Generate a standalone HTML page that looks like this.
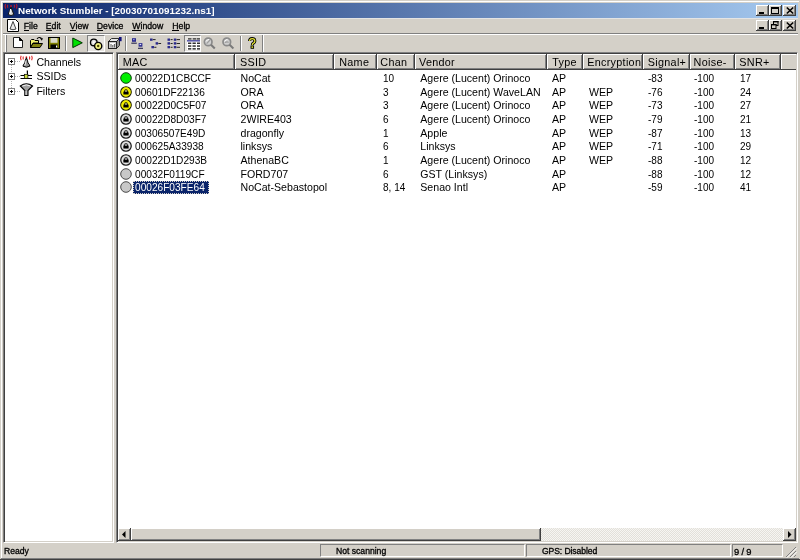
<!DOCTYPE html>
<html><head><meta charset="utf-8">
<style>
*{margin:0;padding:0;box-sizing:border-box}
html,body{width:800px;height:560px;overflow:hidden;background:#d4d0c8}
body{position:relative;will-change:transform;font-family:"Liberation Sans",sans-serif;font-size:10.6px;color:#000}
.a{position:absolute}
.t{position:absolute;white-space:nowrap;line-height:12px}
svg{position:absolute;overflow:visible}
.cbtn{position:absolute;width:13px;height:11px;background:#d4d0c8;border-right:1px solid #404040;border-bottom:1px solid #404040;box-shadow:inset 1px 1px 0 #fff,inset -1px -1px 0 #808080}
.sunk{border-top:1px solid #808080;border-left:1px solid #808080;border-right:1px solid #fff;border-bottom:1px solid #fff}
.in2{position:absolute;left:0;top:0;right:0;bottom:0;box-shadow:inset 1px 1px 0 #404040,inset -1px -1px 0 #d4d0c8}
.menu .t{top:21px;line-height:11px;font-size:8.7px;-webkit-text-stroke:0.3px #000}
.menu u{text-decoration:none;position:relative}
.menu u::after{content:"";position:absolute;left:0;right:0;top:9px;height:1px;background:#000}
.hd{position:absolute;top:54px;height:16px;background:#d4d0c8;border-right:1px solid #404040;border-bottom:1px solid #404040;box-shadow:inset 1px 1px 0 #fff,inset -1px -1px 0 #808080}
.hd span{position:absolute;top:2px;line-height:12px;white-space:nowrap;font-size:10.8px;letter-spacing:0.3px}
.sp{position:absolute;top:544px;height:13px;border-top:1px solid #808080;border-left:1px solid #808080;border-right:1px solid #fff;border-bottom:1px solid #fff}
.sp span{position:absolute;top:1px;line-height:11px;font-size:8.6px;white-space:nowrap;-webkit-text-stroke:0.3px #000}
.vsep{position:absolute;width:2px;border-left:1px solid #808080;border-right:1px solid #fff}
.btn3{position:absolute;background:#d4d0c8;border-right:1px solid #404040;border-bottom:1px solid #404040;box-shadow:inset 1px 1px 0 #fff,inset -1px -1px 0 #808080}
</style></head><body>
<div class="a" style="left:1px;top:1px;width:798px;height:1px;background:#fff"></div>
<div class="a" style="left:1px;top:1px;width:1px;height:558px;background:#fff"></div>
<div class="a" style="left:0;top:559px;width:800px;height:1px;background:#404040"></div>
<div class="a" style="left:1px;top:558px;width:798px;height:1px;background:#808080"></div>
<div class="a" style="left:3px;top:3px;width:795px;height:15px;background:linear-gradient(to right,#0a246a,#a6caf0)"></div>
<div class="a" style="left:3px;top:18px;width:795px;height:1px;background:#e4e4e4"></div>
<svg style="left:0;top:0" width="20" height="18" viewBox="0 0 20 18">
<g fill="none" stroke="#b01830" stroke-width="1.2">
<path d="M5.6 4 Q4.3 6.3 5.6 8.6"/><path d="M7.8 4.8 Q7 6.3 7.8 7.8"/>
<path d="M16.4 4 Q17.7 6.3 16.4 8.6"/><path d="M14.2 4.8 Q15 6.3 14.2 7.8"/>
</g>
<circle cx="11" cy="6" r="1" fill="#b01830"/>
<path d="M11 7 L13.8 14.5 Q11 16.6 8.2 14.5 Z" fill="#d8d8d8" stroke="#101010" stroke-width="1"/>
<path d="M10.6 9 L9.8 14" stroke="#ffffff" stroke-width="1"/>
</svg>
<div class="t" style="left:18px;top:5px;font-weight:bold;font-size:9.9px;color:#fff;line-height:12px">Network Stumbler - [20030701091232.ns1]</div>
<div class="cbtn" style="left:756px;top:5px"></div>
<div class="a" style="left:759px;top:12px;width:5px;height:2px;background:#000"></div>
<div class="cbtn" style="left:769px;top:5px"></div>
<div class="a" style="left:771px;top:6.5px;width:7.5px;height:7px;border:1px solid #000;border-top-width:2px"></div>
<div class="cbtn" style="left:783px;top:5px"></div>
<svg style="left:786px;top:7px" width="8" height="7" viewBox="0 0 8 7"><path d="M0.8 0.5 L7.2 6.5 M7.2 0.5 L0.8 6.5" stroke="#000" stroke-width="1.6"/></svg>
<div class="cbtn" style="left:756px;top:20px"></div>
<div class="a" style="left:759px;top:27px;width:5px;height:2px;background:#000"></div>
<div class="cbtn" style="left:769px;top:20px"></div>
<svg style="left:770px;top:20px" width="10" height="10" viewBox="0 0 10 10">
<rect x="3.5" y="1.5" width="4.5" height="4" fill="none" stroke="#000" stroke-width="1"/><rect x="3" y="1" width="5.5" height="1.4" fill="#000"/>
<rect x="1.5" y="4.5" width="4.5" height="4" fill="#d4d0c8" stroke="#000" stroke-width="1"/><rect x="1" y="4" width="5.5" height="1.4" fill="#000"/></svg>
<div class="cbtn" style="left:783px;top:20px"></div>
<svg style="left:786px;top:22px" width="8" height="7" viewBox="0 0 8 7"><path d="M0.8 0.5 L7.2 6.5 M7.2 0.5 L0.8 6.5" stroke="#000" stroke-width="1.6"/></svg>
<svg style="left:7px;top:19px" width="12" height="13" viewBox="0 0 12 13">
<path d="M0.5 0.5 H8.5 L11.5 3.5 V12.5 H0.5 Z" fill="#fff" stroke="#000" stroke-width="1"/>
<path d="M6 2.5 L9 10 Q6 11.5 3 10 Z" fill="#e8e8e8" stroke="#303030" stroke-width="0.9"/>
</svg>
<div class="menu">
<div class="t" style="left:23.8px"><u>F</u>ile</div>
<div class="t" style="left:45.8px"><u>E</u>dit</div>
<div class="t" style="left:69.8px"><u>V</u>iew</div>
<div class="t" style="left:96.8px"><u>D</u>evice</div>
<div class="t" style="left:132.3px"><u>W</u>indow</div>
<div class="t" style="left:172.3px"><u>H</u>elp</div>
</div>
<div class="a" style="left:3px;top:33px;width:795px;height:1px;background:#808080"></div>
<div class="a" style="left:3px;top:34px;width:795px;height:1px;background:#fff"></div>
<div class="vsep" style="left:5px;top:35px;height:17px;border-left:1px solid #fff;border-right:1px solid #808080"></div>
<div class="vsep" style="left:65px;top:36px;height:15px"></div>
<div class="vsep" style="left:125px;top:36px;height:15px"></div>
<div class="vsep" style="left:240px;top:36px;height:15px"></div>
<div class="vsep" style="left:262px;top:35px;height:17px;border-left:1px solid #808080;border-right:1px solid #fff"></div>
<div class="a" style="left:87px;top:35px;width:18px;height:17px;background:#e6e4e0;border-top:1px solid #808080;border-left:1px solid #808080;border-right:1px solid #fff;border-bottom:1px solid #fff"></div>
<div class="a" style="left:184px;top:35px;width:17px;height:17px;background:#e6e4e0;border-top:1px solid #808080;border-left:1px solid #808080;border-right:1px solid #fff;border-bottom:1px solid #fff"></div>
<svg style="left:0;top:0" width="270" height="56" viewBox="0 0 270 56">
<!-- new -->
<path d="M13.5 37.5 H19.5 L22.5 40.5 V47.5 H13.5 Z" fill="#fff" stroke="#202020" stroke-width="1"/>
<path d="M19.5 37.5 V40.5 H22.5 Z" fill="#000" stroke="#000" stroke-width="1"/>
<!-- open -->
<path d="M30.5 40.5 L31.5 39.5 H34 L35 40.5 H38.5 V43 H33 L30.5 47.5 Z" fill="#f0f070" stroke="#000" stroke-width="1"/>
<path d="M30.5 47.5 L33 43.5 H42.5 L40 47.5 Z" fill="#808010" stroke="#000" stroke-width="1"/>
<path d="M37 39 Q39 36.3 41.5 38.5" fill="none" stroke="#000" stroke-width="1.1"/>
<path d="M40 38.3 H43 L41.8 40.8 Z" fill="#000"/>
<!-- save -->
<rect x="48.5" y="37.5" width="11" height="11" fill="#808000" stroke="#000" stroke-width="1"/>
<rect x="50.5" y="38" width="7" height="4.8" fill="#d8d8c8"/>
<rect x="50.5" y="44.5" width="7" height="4" fill="#000"/>
<rect x="56" y="45.5" width="1.2" height="2" fill="#fff"/>
<!-- play -->
<path d="M72.8 38 L82.3 42.8 L72.8 47.6 Z" fill="#00e000" stroke="#003000" stroke-width="1" stroke-linejoin="round"/>
<!-- gears -->
<circle cx="93.8" cy="42.4" r="3.3" fill="#e0e0e0" stroke="#000" stroke-width="1.4"/>
<circle cx="93.8" cy="42.4" r="1.1" fill="#fff"/>
<circle cx="98.2" cy="46" r="3.6" fill="#f0f080" stroke="#000" stroke-width="1.4"/>
<circle cx="98.2" cy="46" r="1.2" fill="#404000"/>
<!-- box with flag -->
<path d="M108.5 41.5 L111.5 38.5 H119.5 L116.5 41.5 Z" fill="#e8e8e8" stroke="#303030" stroke-width="1"/>
<path d="M116.5 41.5 L119.5 38.5 V45.5 L116.5 48.5 Z" fill="#909090" stroke="#303030" stroke-width="1"/>
<rect x="108.5" y="41.5" width="8" height="7" fill="#c8c8c8" stroke="#202020" stroke-width="1"/>
<rect x="110" y="43" width="5" height="4.5" fill="#fff"/>
<path d="M111 44 V47.5 M112.8 45 V47.5 M114.4 44 V47.5" stroke="#404040" stroke-width="0.9"/>
<rect x="119" y="37" width="2.6" height="4.2" fill="#10107a"/>
<!-- large icons -->
<rect x="132" y="38.2" width="4" height="3.6" fill="#2b2b8c"/><rect x="133" y="39" width="1.6" height="1.2" fill="#9090e0"/>
<rect x="131.3" y="42.7" width="5.5" height="0.9" fill="#000030"/>
<rect x="138.6" y="43.1" width="3.8" height="3.6" fill="#2b2b8c"/><rect x="139.6" y="43.9" width="1.6" height="1.2" fill="#e0e0ff"/>
<rect x="138" y="47.8" width="5" height="0.9" fill="#000030"/>
<!-- small icons -->
<g fill="#2b2b8c"><rect x="150" y="38.5" width="2.6" height="2.3"/><rect x="155.6" y="42.2" width="2.5" height="2.4"/><rect x="151.4" y="46" width="2.6" height="2.3"/></g>
<g fill="#101010"><rect x="152.8" y="39.2" width="2.8" height="0.9"/><rect x="158.3" y="43" width="2.8" height="0.9"/><rect x="154.2" y="46.8" width="2.2" height="0.9"/></g>
<!-- list -->
<g fill="#2b2b8c"><rect x="167.5" y="38.5" width="2.5" height="2.3"/><rect x="173.8" y="38.5" width="2.5" height="2.3"/>
<rect x="167.5" y="42.2" width="2.5" height="2.4"/><rect x="173.8" y="42.2" width="2.5" height="2.4"/>
<rect x="167.5" y="46" width="2.5" height="2.3"/><rect x="173.8" y="46" width="2.5" height="2.3"/></g>
<g fill="#101010"><rect x="170.6" y="39.2" width="2" height="0.9"/><rect x="176.6" y="39.2" width="3.4" height="0.9"/>
<rect x="170.6" y="43" width="2" height="0.9"/><rect x="176.6" y="43" width="3.4" height="0.9"/>
<rect x="170.6" y="46.8" width="2" height="0.9"/><rect x="176.6" y="46.8" width="3.4" height="0.9"/></g>
<!-- details grid -->
<rect x="187" y="40" width="13" height="10" fill="#fff"/>
<g fill="#202020"><rect x="188" y="38.3" width="3.5" height="1.2"/><rect x="192.7" y="38.3" width="3.5" height="1.2"/><rect x="196.8" y="38.3" width="3.2" height="1.2"/></g>
<rect x="187" y="40" width="13" height="1.6" fill="#5a5aa8"/>
<g fill="#303030">
<rect x="188" y="42.5" width="3.3" height="1.5"/><rect x="192.5" y="42.5" width="3.3" height="1.5"/><rect x="197" y="42.5" width="3" height="1.5"/>
<rect x="188" y="45.3" width="3.3" height="1.5"/><rect x="192.5" y="45.3" width="3.3" height="1.5"/><rect x="197" y="45.3" width="3" height="1.5"/>
<rect x="188" y="48.1" width="3.3" height="1.5"/><rect x="192.5" y="48.1" width="3.3" height="1.5"/><rect x="197" y="48.1" width="3" height="1.5"/></g>
<!-- zoom in/out disabled -->
<g fill="none">
<circle cx="208.2" cy="41.9" r="3.8" fill="#cfcfcf" stroke="#8a8a8a" stroke-width="1.7"/>
<path d="M206 41.5 Q207 39.6 209 39.3" stroke="#fff" stroke-width="0.9"/>
<path d="M206.6 43.6 L210 40.2" stroke="#9a9a9a" stroke-width="1.1"/>
<path d="M211 44.7 L214.8 48.5" stroke="#7a7a7a" stroke-width="2"/>
<circle cx="226.8" cy="41.9" r="3.8" fill="#cfcfcf" stroke="#8a8a8a" stroke-width="1.7"/>
<path d="M224.6 41.5 Q225.6 39.6 227.6 39.3" stroke="#fff" stroke-width="0.9"/>
<path d="M224.9 42.6 Q226.8 41.2 228.7 42.4" stroke="#9a9a9a" stroke-width="1.1"/>
<path d="M229.6 44.7 L233.4 48.5" stroke="#7a7a7a" stroke-width="2"/>
</g>
<!-- help -->
<path d="M249.6 41 Q249.6 38.6 252.2 38.6 Q254.9 38.6 254.9 40.9 Q254.9 42.4 253.4 43.1 Q252.3 43.7 252.3 45" fill="none" stroke="#000" stroke-width="3"/>
<path d="M249.6 41 Q249.6 38.6 252.2 38.6 Q254.9 38.6 254.9 40.9 Q254.9 42.4 253.4 43.1 Q252.3 43.7 252.3 45" fill="none" stroke="#e4e430" stroke-width="1.2"/>
<rect x="251" y="45.9" width="2.6" height="2.4" fill="#e4e430" stroke="#000" stroke-width="0.9"/>
</svg>
<div class="a sunk" style="left:3px;top:52px;width:111px;height:491px;background:#fff"><div class="in2"></div></div>
<div class="a" style="left:11px;top:65px;width:1px;height:23px;border-left:1px dotted #b0b0b0"></div>
<div class="a" style="left:15px;top:61px;width:5px;height:1px;border-top:1px dotted #b0b0b0"></div>
<div class="a" style="left:15px;top:76px;width:5px;height:1px;border-top:1px dotted #b0b0b0"></div>
<div class="a" style="left:15px;top:91px;width:5px;height:1px;border-top:1px dotted #b0b0b0"></div>
<div class="a" style="left:8px;top:58px;width:7px;height:7px;border:1px solid #808080;background:#fff"></div>
<div class="a" style="left:10px;top:61px;width:3px;height:1px;background:#000"></div>
<div class="a" style="left:11px;top:60px;width:1px;height:3px;background:#000"></div>
<div class="a" style="left:8px;top:73px;width:7px;height:7px;border:1px solid #808080;background:#fff"></div>
<div class="a" style="left:10px;top:76px;width:3px;height:1px;background:#000"></div>
<div class="a" style="left:11px;top:75px;width:1px;height:3px;background:#000"></div>
<div class="a" style="left:8px;top:88px;width:7px;height:7px;border:1px solid #808080;background:#fff"></div>
<div class="a" style="left:10px;top:91px;width:3px;height:1px;background:#000"></div>
<div class="a" style="left:11px;top:90px;width:1px;height:3px;background:#000"></div>
<svg style="left:0;top:0" width="40" height="100" viewBox="0 0 40 100">
<g fill="none" stroke="#e02828" stroke-width="1.1">
<path d="M21.2 55.8 Q19.9 58 21.2 60.2"/><path d="M23.4 56.6 Q22.7 58 23.4 59.4"/>
<path d="M31.6 55.8 Q32.9 58 31.6 60.2"/><path d="M29.4 56.6 Q30.1 58 29.4 59.4"/>
</g>
<circle cx="26.4" cy="57.2" r="0.9" fill="#e02828"/>
<path d="M26.4 57.8 Q27.6 60 28 63 Q29.8 64.6 29.8 66.2 Q26.4 68.2 23 66.2 Q23 64.6 24.8 63 Q25.2 60 26.4 57.8 Z" fill="#909090" stroke="#000" stroke-width="1"/>
<path d="M26 60.5 L25 65.5" stroke="#e8e8e8" stroke-width="1"/>
<rect x="27" y="70.5" width="1" height="4" fill="#000"/><rect x="26" y="70.5" width="1" height="3" fill="#c0c0c0"/>
<rect x="20.5" y="75" width="11.5" height="1" fill="#000"/><rect x="20.5" y="78" width="11.5" height="1" fill="#000"/>
<rect x="24.3" y="74.3" width="3.6" height="4" fill="#d0e040" stroke="#000" stroke-width="0.7"/>
<path d="M20.3 86 Q26.4 81.6 32.5 86 L28 90.5 V95.5 H24.8 V90.5 Z" fill="#a0a0a0" stroke="#000" stroke-width="1.1"/>
<path d="M22.3 86 Q26.4 83.8 30.5 86" fill="none" stroke="#f0f0f0" stroke-width="1"/>
<path d="M26 91 V95" stroke="#f0f0f0" stroke-width="0.8"/>
</svg>
<div class="t" style="left:36.4px;top:56px">Channels</div>
<div class="t" style="left:36.4px;top:70px">SSIDs</div>
<div class="t" style="left:36.4px;top:84.5px">Filters</div>
<div class="a sunk" style="left:116px;top:52px;width:682px;height:491px;background:#fff"><div class="in2"></div></div>
<div class="hd" style="left:118px;width:117px"><span style="left:4.799999999999997px">MAC</span></div>
<div class="hd" style="left:235px;width:99px"><span style="left:5px">SSID</span></div>
<div class="hd" style="left:334px;width:43px"><span style="left:5.199999999999989px">Name</span></div>
<div class="hd" style="left:377px;width:38px"><span style="left:3.3000000000000114px">Chan</span></div>
<div class="hd" style="left:415px;width:132px"><span style="left:4px">Vendor</span></div>
<div class="hd" style="left:547px;width:36px"><span style="left:5.2000000000000455px">Type</span></div>
<div class="hd" style="left:583px;width:60px"><span style="left:4.2000000000000455px">Encryption</span></div>
<div class="hd" style="left:643px;width:47px"><span style="left:4.7999999999999545px">Signal+</span></div>
<div class="hd" style="left:690px;width:45px"><span style="left:3.6000000000000227px">Noise-</span></div>
<div class="hd" style="left:735px;width:46px"><span style="left:4.2999999999999545px">SNR+</span></div>
<div class="hd" style="left:781px;width:15px;border-right:none;box-shadow:inset 1px 1px 0 #fff"></div>
<svg style="left:120px;top:72.20px" width="12" height="12" viewBox="0 0 12 12"><circle cx="6" cy="6" r="5.3" fill="#00f000" stroke="#104010" stroke-width="1"/></svg>
<div class="t" style="left:134.8px;top:72.20px;font-size:11px;transform:scaleX(0.92);transform-origin:0 0">00022D1CBCCF</div>
<div class="t" style="left:240.5px;top:72.20px">NoCat</div>
<div class="t" style="left:382.5px;top:72.20px;font-size:11px;transform:scaleX(0.91);transform-origin:0 0">10</div>
<div class="t" style="left:420.3px;top:72.20px">Agere (Lucent) Orinoco</div>
<div class="t" style="left:552px;top:72.20px">AP</div>
<div class="t" style="left:648px;top:72.20px;font-size:11px;transform:scaleX(0.91);transform-origin:0 0">-83</div>
<div class="t" style="left:694px;top:72.20px;font-size:11px;transform:scaleX(0.91);transform-origin:0 0">-100</div>
<div class="t" style="left:740px;top:72.20px;font-size:11px;transform:scaleX(0.91);transform-origin:0 0">17</div>
<svg style="left:120px;top:85.83px" width="12" height="12" viewBox="0 0 12 12"><circle cx="6" cy="6" r="5.3" fill="#f4f000" stroke="#202000" stroke-width="1.1"/><circle cx="6" cy="6" r="4.2" fill="none" stroke="#e8e800" stroke-width="0.6"/><rect x="3.4" y="5.6" width="5.2" height="2.9" fill="#000"/><path d="M4.2 6 V5.3 Q4.2 3.3 6 3.3 Q7.8 3.3 7.8 5.3 V6 Z" fill="#000"/><ellipse cx="6" cy="5" rx="1" ry="0.7" fill="#ffffb0"/></svg>
<div class="t" style="left:134.8px;top:85.83px;font-size:11px;transform:scaleX(0.92);transform-origin:0 0">00601DF22136</div>
<div class="t" style="left:240.5px;top:85.83px">ORA</div>
<div class="t" style="left:382.5px;top:85.83px;font-size:11px;transform:scaleX(0.91);transform-origin:0 0">3</div>
<div class="t" style="left:420.3px;top:85.83px">Agere (Lucent) WaveLAN</div>
<div class="t" style="left:552px;top:85.83px">AP</div>
<div class="t" style="left:589px;top:85.83px">WEP</div>
<div class="t" style="left:648px;top:85.83px;font-size:11px;transform:scaleX(0.91);transform-origin:0 0">-76</div>
<div class="t" style="left:694px;top:85.83px;font-size:11px;transform:scaleX(0.91);transform-origin:0 0">-100</div>
<div class="t" style="left:740px;top:85.83px;font-size:11px;transform:scaleX(0.91);transform-origin:0 0">24</div>
<svg style="left:120px;top:99.46px" width="12" height="12" viewBox="0 0 12 12"><circle cx="6" cy="6" r="5.3" fill="#f4f000" stroke="#202000" stroke-width="1.1"/><circle cx="6" cy="6" r="4.2" fill="none" stroke="#e8e800" stroke-width="0.6"/><rect x="3.4" y="5.6" width="5.2" height="2.9" fill="#000"/><path d="M4.2 6 V5.3 Q4.2 3.3 6 3.3 Q7.8 3.3 7.8 5.3 V6 Z" fill="#000"/><ellipse cx="6" cy="5" rx="1" ry="0.7" fill="#ffffb0"/></svg>
<div class="t" style="left:134.8px;top:99.46px;font-size:11px;transform:scaleX(0.92);transform-origin:0 0">00022D0C5F07</div>
<div class="t" style="left:240.5px;top:99.46px">ORA</div>
<div class="t" style="left:382.5px;top:99.46px;font-size:11px;transform:scaleX(0.91);transform-origin:0 0">3</div>
<div class="t" style="left:420.3px;top:99.46px">Agere (Lucent) Orinoco</div>
<div class="t" style="left:552px;top:99.46px">AP</div>
<div class="t" style="left:589px;top:99.46px">WEP</div>
<div class="t" style="left:648px;top:99.46px;font-size:11px;transform:scaleX(0.91);transform-origin:0 0">-73</div>
<div class="t" style="left:694px;top:99.46px;font-size:11px;transform:scaleX(0.91);transform-origin:0 0">-100</div>
<div class="t" style="left:740px;top:99.46px;font-size:11px;transform:scaleX(0.91);transform-origin:0 0">27</div>
<svg style="left:120px;top:113.09px" width="12" height="12" viewBox="0 0 12 12"><circle cx="6" cy="6" r="5.3" fill="#a8a8a8" stroke="#1a1a1a" stroke-width="1.1"/><circle cx="6" cy="6" r="3.8" fill="#c8c8c8" stroke="#f0f0f0" stroke-width="0.9"/><rect x="3.4" y="5.6" width="5.2" height="2.9" fill="#000"/><path d="M4.2 6 V5.3 Q4.2 3.3 6 3.3 Q7.8 3.3 7.8 5.3 V6 Z" fill="#000"/><ellipse cx="6" cy="5" rx="1" ry="0.7" fill="#ffffff"/></svg>
<div class="t" style="left:134.8px;top:113.09px;font-size:11px;transform:scaleX(0.92);transform-origin:0 0">00022D8D03F7</div>
<div class="t" style="left:240.5px;top:113.09px">2WIRE403</div>
<div class="t" style="left:382.5px;top:113.09px;font-size:11px;transform:scaleX(0.91);transform-origin:0 0">6</div>
<div class="t" style="left:420.3px;top:113.09px">Agere (Lucent) Orinoco</div>
<div class="t" style="left:552px;top:113.09px">AP</div>
<div class="t" style="left:589px;top:113.09px">WEP</div>
<div class="t" style="left:648px;top:113.09px;font-size:11px;transform:scaleX(0.91);transform-origin:0 0">-79</div>
<div class="t" style="left:694px;top:113.09px;font-size:11px;transform:scaleX(0.91);transform-origin:0 0">-100</div>
<div class="t" style="left:740px;top:113.09px;font-size:11px;transform:scaleX(0.91);transform-origin:0 0">21</div>
<svg style="left:120px;top:126.72px" width="12" height="12" viewBox="0 0 12 12"><circle cx="6" cy="6" r="5.3" fill="#a8a8a8" stroke="#1a1a1a" stroke-width="1.1"/><circle cx="6" cy="6" r="3.8" fill="#c8c8c8" stroke="#f0f0f0" stroke-width="0.9"/><rect x="3.4" y="5.6" width="5.2" height="2.9" fill="#000"/><path d="M4.2 6 V5.3 Q4.2 3.3 6 3.3 Q7.8 3.3 7.8 5.3 V6 Z" fill="#000"/><ellipse cx="6" cy="5" rx="1" ry="0.7" fill="#ffffff"/></svg>
<div class="t" style="left:134.8px;top:126.72px;font-size:11px;transform:scaleX(0.92);transform-origin:0 0">00306507E49D</div>
<div class="t" style="left:240.5px;top:126.72px">dragonfly</div>
<div class="t" style="left:382.5px;top:126.72px;font-size:11px;transform:scaleX(0.91);transform-origin:0 0">1</div>
<div class="t" style="left:420.3px;top:126.72px">Apple</div>
<div class="t" style="left:552px;top:126.72px">AP</div>
<div class="t" style="left:589px;top:126.72px">WEP</div>
<div class="t" style="left:648px;top:126.72px;font-size:11px;transform:scaleX(0.91);transform-origin:0 0">-87</div>
<div class="t" style="left:694px;top:126.72px;font-size:11px;transform:scaleX(0.91);transform-origin:0 0">-100</div>
<div class="t" style="left:740px;top:126.72px;font-size:11px;transform:scaleX(0.91);transform-origin:0 0">13</div>
<svg style="left:120px;top:140.35px" width="12" height="12" viewBox="0 0 12 12"><circle cx="6" cy="6" r="5.3" fill="#a8a8a8" stroke="#1a1a1a" stroke-width="1.1"/><circle cx="6" cy="6" r="3.8" fill="#c8c8c8" stroke="#f0f0f0" stroke-width="0.9"/><rect x="3.4" y="5.6" width="5.2" height="2.9" fill="#000"/><path d="M4.2 6 V5.3 Q4.2 3.3 6 3.3 Q7.8 3.3 7.8 5.3 V6 Z" fill="#000"/><ellipse cx="6" cy="5" rx="1" ry="0.7" fill="#ffffff"/></svg>
<div class="t" style="left:134.8px;top:140.35px;font-size:11px;transform:scaleX(0.92);transform-origin:0 0">000625A33938</div>
<div class="t" style="left:240.5px;top:140.35px">linksys</div>
<div class="t" style="left:382.5px;top:140.35px;font-size:11px;transform:scaleX(0.91);transform-origin:0 0">6</div>
<div class="t" style="left:420.3px;top:140.35px">Linksys</div>
<div class="t" style="left:552px;top:140.35px">AP</div>
<div class="t" style="left:589px;top:140.35px">WEP</div>
<div class="t" style="left:648px;top:140.35px;font-size:11px;transform:scaleX(0.91);transform-origin:0 0">-71</div>
<div class="t" style="left:694px;top:140.35px;font-size:11px;transform:scaleX(0.91);transform-origin:0 0">-100</div>
<div class="t" style="left:740px;top:140.35px;font-size:11px;transform:scaleX(0.91);transform-origin:0 0">29</div>
<svg style="left:120px;top:153.98px" width="12" height="12" viewBox="0 0 12 12"><circle cx="6" cy="6" r="5.3" fill="#a8a8a8" stroke="#1a1a1a" stroke-width="1.1"/><circle cx="6" cy="6" r="3.8" fill="#c8c8c8" stroke="#f0f0f0" stroke-width="0.9"/><rect x="3.4" y="5.6" width="5.2" height="2.9" fill="#000"/><path d="M4.2 6 V5.3 Q4.2 3.3 6 3.3 Q7.8 3.3 7.8 5.3 V6 Z" fill="#000"/><ellipse cx="6" cy="5" rx="1" ry="0.7" fill="#ffffff"/></svg>
<div class="t" style="left:134.8px;top:153.98px;font-size:11px;transform:scaleX(0.92);transform-origin:0 0">00022D1D293B</div>
<div class="t" style="left:240.5px;top:153.98px">AthenaBC</div>
<div class="t" style="left:382.5px;top:153.98px;font-size:11px;transform:scaleX(0.91);transform-origin:0 0">1</div>
<div class="t" style="left:420.3px;top:153.98px">Agere (Lucent) Orinoco</div>
<div class="t" style="left:552px;top:153.98px">AP</div>
<div class="t" style="left:589px;top:153.98px">WEP</div>
<div class="t" style="left:648px;top:153.98px;font-size:11px;transform:scaleX(0.91);transform-origin:0 0">-88</div>
<div class="t" style="left:694px;top:153.98px;font-size:11px;transform:scaleX(0.91);transform-origin:0 0">-100</div>
<div class="t" style="left:740px;top:153.98px;font-size:11px;transform:scaleX(0.91);transform-origin:0 0">12</div>
<svg style="left:120px;top:167.61px" width="12" height="12" viewBox="0 0 12 12"><circle cx="6" cy="6" r="5.3" fill="#c8c8c8" stroke="#4a4a4a" stroke-width="1"/></svg>
<div class="t" style="left:134.8px;top:167.61px;font-size:11px;transform:scaleX(0.92);transform-origin:0 0">00032F0119CF</div>
<div class="t" style="left:240.5px;top:167.61px">FORD707</div>
<div class="t" style="left:382.5px;top:167.61px;font-size:11px;transform:scaleX(0.91);transform-origin:0 0">6</div>
<div class="t" style="left:420.3px;top:167.61px">GST (Linksys)</div>
<div class="t" style="left:552px;top:167.61px">AP</div>
<div class="t" style="left:648px;top:167.61px;font-size:11px;transform:scaleX(0.91);transform-origin:0 0">-88</div>
<div class="t" style="left:694px;top:167.61px;font-size:11px;transform:scaleX(0.91);transform-origin:0 0">-100</div>
<div class="t" style="left:740px;top:167.61px;font-size:11px;transform:scaleX(0.91);transform-origin:0 0">12</div>
<svg style="left:120px;top:181.24px" width="12" height="12" viewBox="0 0 12 12"><circle cx="6" cy="6" r="5.3" fill="#c8c8c8" stroke="#4a4a4a" stroke-width="1"/></svg>
<div class="a" style="left:133px;top:180.74px;width:76px;height:13px;background:#0a246a;outline:1px dotted #d4d0c8;outline-offset:-1px"></div>
<div class="t" style="left:134.8px;top:181.24px;color:#fff;font-size:11px;transform:scaleX(0.92);transform-origin:0 0">00026F03FE64</div>
<div class="t" style="left:240.5px;top:181.24px">NoCat-Sebastopol</div>
<div class="t" style="left:382.5px;top:181.24px;font-size:11px;transform:scaleX(0.91);transform-origin:0 0">8, 14</div>
<div class="t" style="left:420.3px;top:181.24px">Senao Intl</div>
<div class="t" style="left:552px;top:181.24px">AP</div>
<div class="t" style="left:648px;top:181.24px;font-size:11px;transform:scaleX(0.91);transform-origin:0 0">-59</div>
<div class="t" style="left:694px;top:181.24px;font-size:11px;transform:scaleX(0.91);transform-origin:0 0">-100</div>
<div class="t" style="left:740px;top:181.24px;font-size:11px;transform:scaleX(0.91);transform-origin:0 0">41</div>
<div class="a" style="left:118px;top:528px;width:678px;height:13px;background-color:#ecebe7;background-image:repeating-conic-gradient(#e2e0da 0 25%,#f6f5f2 0 50%);background-size:2px 2px"></div>
<div class="btn3" style="left:118px;top:528px;width:13px;height:13px"></div>
<svg style="left:122px;top:531px" width="4" height="7" viewBox="0 0 4 7"><path d="M3.5 0 V7 L0 3.5 Z" fill="#000"/></svg>
<div class="btn3" style="left:131px;top:528px;width:410px;height:13px"></div>
<div class="btn3" style="left:783px;top:528px;width:13px;height:13px"></div>
<svg style="left:788px;top:531px" width="4" height="7" viewBox="0 0 4 7"><path d="M0 0 V7 L3.5 3.5 Z" fill="#000"/></svg>
<div class="t" style="left:4px;top:546px;font-size:8.6px;line-height:11px;-webkit-text-stroke:0.3px #000">Ready</div>
<div class="sp" style="left:320px;width:205px"><span style="left:15px">Not scanning</span></div>
<div class="sp" style="left:526px;width:205px"><span style="left:15px;letter-spacing:-0.1px">GPS: Disabled</span></div>
<div class="sp" style="left:732px;width:51px"><span style="left:1px;font-size:9.4px;letter-spacing:-0.2px">9 / 9</span></div>
<svg style="left:785px;top:546px" width="12" height="12" viewBox="0 0 12 12">
<g stroke-width="1"><path d="M11 1 L1 11 M11 5 L5 11 M11 9 L9 11" stroke="#808080"/>
<path d="M11.8 1.8 L1.8 11.8 M11.8 5.8 L5.8 11.8" stroke="#fff"/></g></svg>
</body></html>
